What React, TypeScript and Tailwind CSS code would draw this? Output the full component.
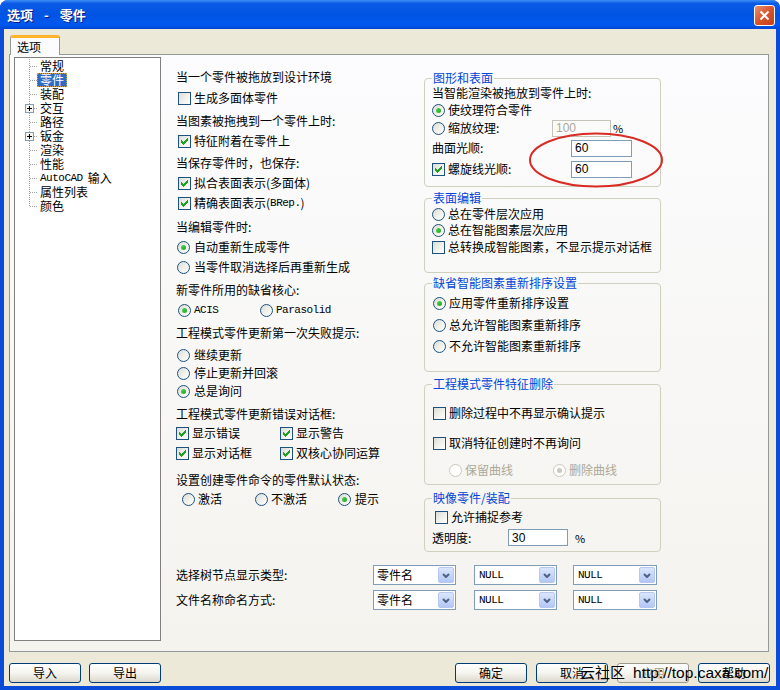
import React from "react";

const MONO = "font-['Liberation_Mono',monospace] text-[11px] tracking-[-0.5px]";

function Check({ checked = false }: { checked?: boolean }) {
  return (
    <span className="inline-flex w-[13px] h-[13px] shrink-0 items-center justify-center border border-[#1c5180] bg-linear-to-br from-[#dcdcd7] via-[#f0f0ea] to-white">
      {checked && (
        <svg width="7" height="7" viewBox="0 0 7 7" shapeRendering="crispEdges">
          <path
            d="M0 2h1v3h-1z M1 3h1v3h-1z M2 4h1v3h-1z M3 3h1v3h-1z M4 2h1v3h-1z M5 1h1v3h-1z M6 0h1v3h-1z"
            fill="#21a121"
          />
        </svg>
      )}
    </span>
  );
}

function Radio({ checked = false, disabled = false }: { checked?: boolean; disabled?: boolean }) {
  return (
    <span
      className={
        disabled
          ? "inline-flex w-[13px] h-[13px] shrink-0 items-center justify-center rounded-full border border-[#cac8bb] bg-white"
          : "inline-flex w-[13px] h-[13px] shrink-0 items-center justify-center rounded-full border border-[#1c5180] bg-linear-to-br from-[#dcdcd7] via-[#f0f0ea] to-white"
      }
    >
      {checked && (
        <span
          className={
            disabled
              ? "w-[5px] h-[5px] rounded-full bg-[#cac8bb]"
              : "w-[5px] h-[5px] rounded-full bg-linear-to-br from-[#55d551] to-[#21a121]"
          }
        />
      )}
    </span>
  );
}

function Row({ className, children }: { className: string; children: React.ReactNode }) {
  return <div className={"flex items-center " + className}>{children}</div>;
}

function Chevron() {
  return (
    <svg width="8" height="5" viewBox="0 0 8 5">
      <path d="M1 1 L4 4 L7 1" stroke="#4d6185" strokeWidth="2" fill="none" />
    </svg>
  );
}

function Combo({ text, w, mono = false }: { text: string; w: string; mono?: boolean }) {
  return (
    <div className={"h-[20px] border border-[#7f9db9] bg-white flex items-center " + w}>
      <span className={mono ? "flex-1 pl-[4px] " + MONO : "flex-1 pl-[3px]"}>{text}</span>
      <span className="w-[16px] h-[16px] mr-[1px] rounded-[2px] border border-[#b6c8f2] bg-linear-to-b from-[#dbe6fd] to-[#b3c7f6] flex items-center justify-center">
        <Chevron />
      </span>
    </div>
  );
}

function Btn({ children, disabled = false }: { children: React.ReactNode; disabled?: boolean }) {
  return (
    <div
      className={
        disabled
          ? "w-[72px] h-[20px] rounded-[3px] border border-[#9c9a8e] bg-linear-to-b from-white via-[#f5f4ef] to-[#e6e3da] flex items-center justify-center text-[#aca899]"
          : "w-[72px] h-[20px] rounded-[3px] border border-[#003c74] bg-linear-to-b from-white via-[#f5f4ef] to-[#dcd8cc] flex items-center justify-center"
      }
    >
      {children}
    </div>
  );
}

const treeItems = ["常规", "零件", "装配", "交互", "路径", "钣金", "渲染", "性能", "AutoCAD 输入", "属性列表", "颜色"];
const plusIdx = [3, 5];

function Tree() {
  return (
    <div className="w-[147px] h-[584px] mt-[2px] ml-[4px] border border-[#7f7f7f] bg-white pt-[1px] flex items-start">
      <svg width="23" height="154" className="shrink-0">
        <line x1="14.5" y1="0" x2="14.5" y2="148" stroke="#a0a0a0" strokeDasharray="1 1" />
        {treeItems.map((_, i) => {
          const cy = 14 * i + 7.5;
          return <line key={i} x1="15" y1={cy} x2="23" y2={cy} stroke="#a0a0a0" strokeDasharray="1 1" />;
        })}
        {plusIdx.map((i) => {
          const t = 14 * i;
          return (
            <g key={i}>
              <rect x="10.5" y={t + 3.5} width="8" height="8" fill="#f4f4f0" stroke="#8c9cad" />
              <line x1="12" y1={t + 7.5} x2="17" y2={t + 7.5} stroke="#000" />
              <line x1="14.5" y1={t + 5} x2="14.5" y2={t + 10} stroke="#000" />
            </g>
          );
        })}
      </svg>
      <div className="flex flex-col">
        {treeItems.map((t, i) => (
          <div key={i} className="h-[14px] leading-[14px] flex">
            {i === 1 ? (
              <span className="px-[3px] -ml-[1px] bg-[#316ac5] text-white outline outline-1 outline-dotted outline-[#c8a060] -outline-offset-1">{t}</span>
            ) : t.startsWith("AutoCAD") ? (
              <span className="px-[2px] flex items-center gap-[5px]">
                <span className={MONO}>AutoCAD</span>
                <span>输入</span>
              </span>
            ) : (
              <span className="px-[2px]">{t}</span>
            )}
          </div>
        ))}
      </div>
    </div>
  );
}

function LeftColumn() {
  return (
    <div className="ml-[15px] mt-[13px] w-[248px] shrink-0 flex flex-col">
      <Row className="h-[18px]">当一个零件被拖放到设计环境</Row>
      <Row className="h-[18px] mt-[3px] pl-[2px] gap-[3px]">
        <Check />
        生成多面体零件
      </Row>
      <Row className="h-[18px] mt-[5px]">当图素被拖拽到一个零件上时:</Row>
      <Row className="h-[18px] mt-[2px] pl-[2px] gap-[3px]">
        <Check checked />
        特征附着在零件上
      </Row>
      <Row className="h-[18px] mt-[4px]">当保存零件时，也保存:</Row>
      <Row className="h-[18px] mt-[2px] pl-[2px] gap-[3px]">
        <Check checked />
        拟合表面表示(多面体)
      </Row>
      <Row className="h-[18px] mt-[2px] pl-[2px] gap-[3px]">
        <Check checked />
        <span className="flex items-center">
          精确表面表示(<span className={MONO}>BRep.</span>)
        </span>
      </Row>
      <Row className="h-[18px] mt-[6px]">当编辑零件时:</Row>
      <Row className="h-[18px] mt-[2px] pl-[1px] gap-[4px]">
        <Radio checked />
        自动重新生成零件
      </Row>
      <Row className="h-[18px] mt-[2px] pl-[1px] gap-[4px]">
        <Radio />
        当零件取消选择后再重新生成
      </Row>
      <Row className="h-[18px] mt-[5px]">新零件所用的缺省核心:</Row>
      <Row className="h-[18px] mt-[2px] pl-[2px]">
        <div className="w-[82px] flex items-center gap-[3px]">
          <Radio checked />
          <span className={MONO}>ACIS</span>
        </div>
        <div className="flex items-center gap-[3px]">
          <Radio />
          <span className={MONO}>Parasolid</span>
        </div>
      </Row>
      <Row className="h-[18px] mt-[5px]">工程模式零件更新第一次失败提示:</Row>
      <Row className="h-[18px] mt-[4px] pl-[1px] gap-[4px]">
        <Radio />
        继续更新
      </Row>
      <Row className="h-[18px] pl-[1px] gap-[4px]">
        <Radio />
        停止更新并回滚
      </Row>
      <Row className="h-[18px] pl-[1px] gap-[4px]">
        <Radio checked />
        总是询问
      </Row>
      <Row className="h-[18px] mt-[5px]">工程模式零件更新错误对话框:</Row>
      <Row className="h-[18px] mt-[1px]">
        <div className="w-[104px] flex items-center gap-[3px]">
          <Check checked />
          显示错误
        </div>
        <div className="flex items-center gap-[3px]">
          <Check checked />
          显示警告
        </div>
      </Row>
      <Row className="h-[18px] mt-[2px]">
        <div className="w-[104px] flex items-center gap-[3px]">
          <Check checked />
          显示对话框
        </div>
        <div className="flex items-center gap-[3px]">
          <Check checked />
          双核心协同运算
        </div>
      </Row>
      <Row className="h-[18px] mt-[9px]">设置创建零件命令的零件默认状态:</Row>
      <Row className="h-[18px] mt-[1px] pl-[6px]">
        <div className="w-[73px] flex items-center gap-[3px]">
          <Radio />
          激活
        </div>
        <div className="w-[83px] flex items-center gap-[3px]">
          <Radio />
          不激活
        </div>
        <div className="flex items-center gap-[4px]">
          <Radio checked />
          提示
        </div>
      </Row>
    </div>
  );
}

function Input({ value, w, disabled = false }: { value: string; w: string; disabled?: boolean }) {
  return (
    <div
      className={
        disabled
          ? "h-[17px] border border-[#c5c3b8] bg-[#fbfbf9] text-[#aca899] flex items-center pl-[3px] font-['Liberation_Sans',sans-serif] text-[12px] " + w
          : "h-[17px] border border-[#7f9db9] bg-white flex items-center pl-[3px] font-['Liberation_Sans',sans-serif] text-[12px] " + w
      }
    >
      {value}
    </div>
  );
}

function Legend({ children }: { children: React.ReactNode }) {
  return <legend className="px-[1px] leading-[14px] text-[#0046d5]">{children}</legend>;
}

function RightColumn() {
  return (
    <div className="w-[237px] shrink-0 mt-[16px] flex flex-col">
      <fieldset className="border border-[#d0d0bf] rounded-[4px] px-[7px] pb-[9px]">
        <Legend>图形和表面</Legend>
        <Row className="h-[16px]">当智能渲染被拖放到零件上时:</Row>
        <Row className="h-[16px] mt-[1px] gap-[3px]">
          <Radio checked />
          使纹理符合零件
        </Row>
        <Row className="h-[16px] mt-[2px]">
          <div className="w-[120px] flex items-center gap-[3px]">
            <Radio />
            缩放纹理:
          </div>
          <Input value="100" w="w-[59px]" disabled />
          <span className="ml-[2px] text-[11px]">%</span>
        </Row>
        <Row className="h-[16px] mt-[4px]">
          <div className="w-[139px]">曲面光顺:</div>
          <Input value="60" w="w-[61px]" />
        </Row>
        <Row className="h-[16px] mt-[5px]">
          <div className="w-[139px] flex items-center gap-[3px]">
            <Check checked />
            螺旋线光顺:
          </div>
          <Input value="60" w="w-[61px]" />
        </Row>
      </fieldset>

      <fieldset className="mt-[4px] border border-[#d0d0bf] rounded-[4px] px-[7px] pb-[17px]">
        <Legend>表面编辑</Legend>
        <Row className="h-[16px] mt-[1px] gap-[3px]">
          <Radio />
          总在零件层次应用
        </Row>
        <Row className="h-[16px] gap-[3px]">
          <Radio checked />
          总在智能图素层次应用
        </Row>
        <Row className="h-[16px] mt-[1px] gap-[3px]">
          <Check />
          总转换成智能图素，不显示提示对话框
        </Row>
      </fieldset>

      <fieldset className="mt-[3px] border border-[#d0d0bf] rounded-[4px] px-[7px] pb-[17px]">
        <Legend>缺省智能图素重新排序设置</Legend>
        <Row className="h-[16px] mt-[5px] pl-[1px] gap-[3px]">
          <Radio checked />
          应用零件重新排序设置
        </Row>
        <Row className="h-[16px] mt-[6px] pl-[1px] gap-[3px]">
          <Radio />
          总允许智能图素重新排序
        </Row>
        <Row className="h-[16px] mt-[5px] pl-[1px] gap-[3px]">
          <Radio />
          不允许智能图素重新排序
        </Row>
      </fieldset>

      <fieldset className="mt-[5px] border border-[#d0d0bf] rounded-[4px] px-[7px] pb-[6px]">
        <Legend>工程模式零件特征删除</Legend>
        <Row className="h-[16px] mt-[14px] pl-[1px] gap-[3px]">
          <Check />
          删除过程中不再显示确认提示
        </Row>
        <Row className="h-[16px] mt-[14px] pl-[1px] gap-[3px]">
          <Check />
          取消特征创建时不再询问
        </Row>
        <Row className="h-[16px] mt-[11px] pl-[17px] text-[#aca899]">
          <div className="w-[104px] flex items-center gap-[3px]">
            <Radio disabled />
            保留曲线
          </div>
          <div className="flex items-center gap-[3px]">
            <Radio disabled checked />
            删除曲线
          </div>
        </Row>
      </fieldset>

      <fieldset className="mt-[6px] border border-[#d0d0bf] rounded-[4px] px-[7px] pb-[5px]">
        <Legend>映像零件/装配</Legend>
        <Row className="h-[16px] mt-[4px] pl-[3px] gap-[3px]">
          <Check />
          允许捕捉参考
        </Row>
        <Row className="h-[17px] mt-[4px]">
          <div className="w-[76px]">透明度:</div>
          <Input value="30" w="w-[60px]" />
          <span className="ml-[7px] text-[11px]">%</span>
        </Row>
      </fieldset>
    </div>
  );
}

export default function App() {
  return (
    <div className="relative w-[780px] h-[690px] flex flex-col bg-[#0a4bd8] rounded-t-[8px] overflow-hidden font-['Noto_Sans_CJK_SC',sans-serif] text-[12px] leading-[14px] text-black">
      {/* Title bar */}
      <div className="h-[29px] shrink-0 flex items-center justify-between bg-[linear-gradient(#3c8ff5_0%,#0a5ae6_12%,#0054e3_50%,#0058ee_85%,#0046d5_100%)]">
        <div className="ml-[7px] flex items-center gap-[11px] text-white font-bold text-[13px] [text-shadow:1px_1px_0_#0a1883]">
          <span>选项</span>
          <span>-</span>
          <span>零件</span>
        </div>
        <div className="mr-[5px] mt-[1px] w-[21px] h-[21px] rounded-[3px] border border-white bg-linear-to-br from-[#e9906f] via-[#d8532a] to-[#c2401a] flex items-center justify-center">
          <svg width="11" height="11" viewBox="0 0 11 11">
            <path d="M1.5 1.5 L9.5 9.5 M9.5 1.5 L1.5 9.5" stroke="#fff" strokeWidth="2" />
          </svg>
        </div>
      </div>

      {/* Body */}
      <div className="flex-1 mx-[4px] mb-[4px] bg-[#ece9d8] flex flex-col">
        {/* Tab strip */}
        <div className="pt-[6px] flex">
          <div className="relative z-10 ml-[6px] w-[50px] h-[20px] -mb-[1px] rounded-t-[3px] border-t-[3px] border-t-[#ffb22e] border-x border-x-[#919b9c] bg-[#fcfcfe] pl-[6px] flex items-center">
            选项
          </div>
        </div>
        {/* Panel */}
        <div className="ml-[5px] w-[760px] h-[598px] border border-[#919b9c] bg-linear-to-b from-[#fcfcfe] to-[#f4f3ee] flex">
          <Tree />
          <div className="flex-1 flex flex-col">
            <div className="flex">
              <LeftColumn />
              <RightColumn />
            </div>
            <div className="ml-[15px] mt-[13px] flex items-center h-[20px]">
              <div className="w-[197px]">选择树节点显示类型:</div>
              <Combo text="零件名" w="w-[83px]" />
              <div className="ml-[18px]">
                <Combo text="NULL" w="w-[83px]" mono />
              </div>
              <div className="ml-[16px]">
                <Combo text="NULL" w="w-[84px]" mono />
              </div>
            </div>
            <div className="ml-[15px] mt-[5px] flex items-center h-[20px]">
              <div className="w-[197px]">文件名称命名方式:</div>
              <Combo text="零件名" w="w-[83px]" />
              <div className="ml-[18px]">
                <Combo text="NULL" w="w-[83px]" mono />
              </div>
              <div className="ml-[16px]">
                <Combo text="NULL" w="w-[84px]" mono />
              </div>
            </div>
          </div>
        </div>
        {/* Buttons */}
        <div className="mt-[11px] flex justify-between">
          <div className="ml-[5px] flex gap-[8px]">
            <Btn>导入</Btn>
            <Btn>导出</Btn>
          </div>
          <div className="mr-[6px] flex gap-[9px]">
            <Btn>确定</Btn>
            <Btn>取消</Btn>
            <Btn disabled>应用</Btn>
            <Btn>帮助</Btn>
          </div>
        </div>
      </div>

      {/* Red annotation ellipse */}
      <svg className="absolute left-[528px] top-[131px]" width="138" height="60" viewBox="0 0 138 60">
        <ellipse cx="68" cy="29" rx="66" ry="26.5" fill="none" stroke="#d92b24" strokeWidth="2" />
      </svg>

      {/* Watermark */}
      <div className="absolute left-[580px] top-[664px] flex items-baseline leading-[16px] text-black">
        <span className="text-[15px]">云社区</span>
        <span className="ml-[8px] font-['Liberation_Sans',sans-serif] text-[15.5px]">http://top.caxa.com/</span>
      </div>
    </div>
  );
}
